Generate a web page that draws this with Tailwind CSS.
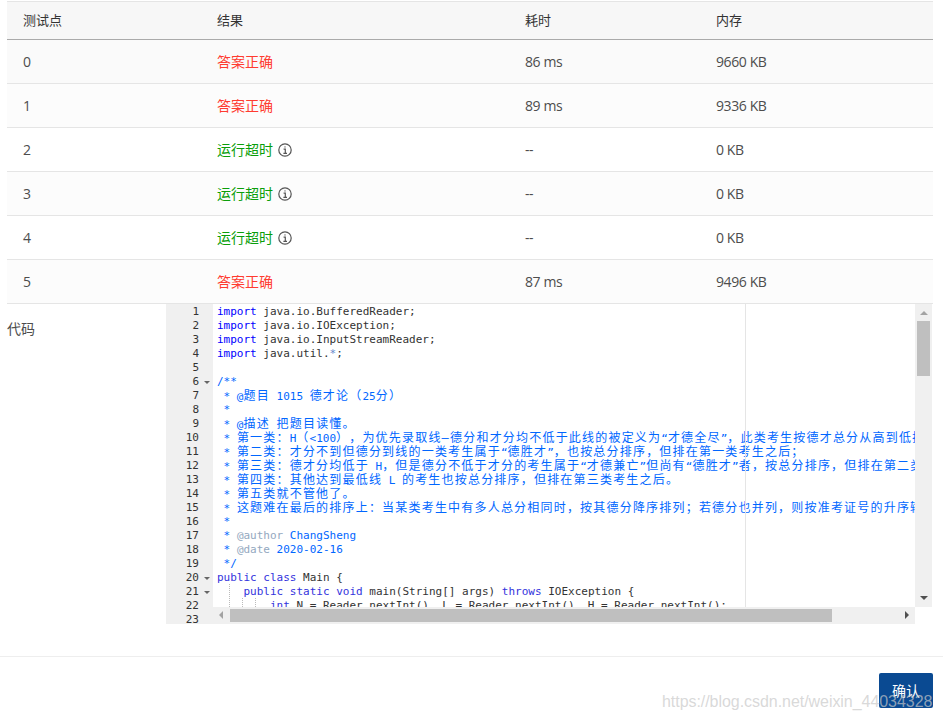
<!DOCTYPE html>
<html lang="en">
<head>
    <meta charset="UTF-8">
    <title>测试点结果</title>
    <script src="https://cdn.jsdelivr.net/npm/@tailwindcss/browser@4"></script>
</head>
<body class="bg-white text-[14px] text-[#4d4d4d] font-['Open_Sans','Noto_Sans_CJK_SC',sans-serif]">
    <div class="relative h-[720px] w-[943px] overflow-hidden">
        <!-- Results table -->
        <div class="pt-px pl-[7px] pr-[10px]">
            <table class="w-full table-fixed border-collapse">
                <colgroup>
                    <col class="w-[194px]">
                    <col class="w-[308px]">
                    <col class="w-[191px]">
                    <col>
                </colgroup>
                <thead>
                    <tr class="h-[38px] bg-[#f7f7f7] border-t border-t-[#e5e5e5] border-b border-b-[#aaaaaa] text-left text-[13px] text-[#333]">
                        <th class="pl-4 font-normal">测试点</th>
                        <th class="pl-4 font-normal">结果</th>
                        <th class="pl-4 font-normal">耗时</th>
                        <th class="pl-4 font-normal">内存</th>
                    </tr>
                </thead>
                <tbody class="tracking-[-0.4px]">
                    <tr class="h-[44px] bg-[#fafafa] border-b border-[#e5e5e5]">
                        <td class="pl-4">0</td>
                        <td class="pl-4 tracking-normal text-[#ff3b30]">答案正确</td>
                        <td class="pl-4">86 ms</td>
                        <td class="pl-4">9660 KB</td>
                    </tr>
                    <tr class="h-[44px] bg-[#fcfcfc] border-b border-[#e5e5e5]">
                        <td class="pl-4">1</td>
                        <td class="pl-4 tracking-normal text-[#ff3b30]">答案正确</td>
                        <td class="pl-4">89 ms</td>
                        <td class="pl-4">9336 KB</td>
                    </tr>
                    <tr class="h-[44px] border-b border-[#e5e5e5]">
                        <td class="pl-4">2</td>
                        <td class="pl-4 tracking-normal text-[#0a9e0a]">
                            <span class="flex items-center gap-[5px]">运行超时
                                <svg class="h-[14px] w-[14px]" viewBox="0 0 14 14" fill="none" stroke="#555" stroke-width="1.2"><circle cx="7" cy="7" r="6.2"/><path d="M5.6 6.2H7.3V10.4M5.4 10.4H9"/><circle cx="7" cy="3.9" r=".7" fill="#555" stroke="none"/></svg>
                            </span>
                        </td>
                        <td class="pl-4">--</td>
                        <td class="pl-4">0 KB</td>
                    </tr>
                    <tr class="h-[44px] bg-[#fcfcfc] border-b border-[#e5e5e5]">
                        <td class="pl-4">3</td>
                        <td class="pl-4 tracking-normal text-[#0a9e0a]">
                            <span class="flex items-center gap-[5px]">运行超时
                                <svg class="h-[14px] w-[14px]" viewBox="0 0 14 14" fill="none" stroke="#555" stroke-width="1.2"><circle cx="7" cy="7" r="6.2"/><path d="M5.6 6.2H7.3V10.4M5.4 10.4H9"/><circle cx="7" cy="3.9" r=".7" fill="#555" stroke="none"/></svg>
                            </span>
                        </td>
                        <td class="pl-4">--</td>
                        <td class="pl-4">0 KB</td>
                    </tr>
                    <tr class="h-[44px] border-b border-[#e5e5e5]">
                        <td class="pl-4">4</td>
                        <td class="pl-4 tracking-normal text-[#0a9e0a]">
                            <span class="flex items-center gap-[5px]">运行超时
                                <svg class="h-[14px] w-[14px]" viewBox="0 0 14 14" fill="none" stroke="#555" stroke-width="1.2"><circle cx="7" cy="7" r="6.2"/><path d="M5.6 6.2H7.3V10.4M5.4 10.4H9"/><circle cx="7" cy="3.9" r=".7" fill="#555" stroke="none"/></svg>
                            </span>
                        </td>
                        <td class="pl-4">--</td>
                        <td class="pl-4">0 KB</td>
                    </tr>
                    <tr class="h-[44px] bg-[#fcfcfc] border-b border-[#e5e5e5]">
                        <td class="pl-4">5</td>
                        <td class="pl-4 tracking-normal text-[#ff3b30]">答案正确</td>
                        <td class="pl-4">87 ms</td>
                        <td class="pl-4">9496 KB</td>
                    </tr>
                </tbody>
            </table>
        </div>

        <!-- Code block -->
        <div class="flex pl-[7px]">
            <div class="w-[159px] pt-[15px] leading-[20px]">代码</div>
            <div class="flex h-[320px] w-[766px] font-['DejaVu_Sans_Mono','Noto_Sans_CJK_SC',monospace] text-[11px] leading-[14px] [text-spacing-trim:space-all]">
                <!-- Gutter -->
                <div class="h-[320px] w-[47px] shrink-0 overflow-hidden bg-[#f0f0f0] pt-px text-right text-[#333]">
                    <div class="pr-[14px]">1</div>
                    <div class="pr-[14px]">2</div>
                    <div class="pr-[14px]">3</div>
                    <div class="pr-[14px]">4</div>
                    <div class="pr-[14px]">5</div>
                    <div class="relative pr-[14px]">6<span class="absolute right-[3px] top-[6px] border-x-[3px] border-t-[3px] border-x-transparent border-t-[#666]"></span></div>
                    <div class="pr-[14px]">7</div>
                    <div class="pr-[14px]">8</div>
                    <div class="pr-[14px]">9</div>
                    <div class="pr-[14px]">10</div>
                    <div class="pr-[14px]">11</div>
                    <div class="pr-[14px]">12</div>
                    <div class="pr-[14px]">13</div>
                    <div class="pr-[14px]">14</div>
                    <div class="pr-[14px]">15</div>
                    <div class="pr-[14px]">16</div>
                    <div class="pr-[14px]">17</div>
                    <div class="pr-[14px]">18</div>
                    <div class="pr-[14px]">19</div>
                    <div class="relative pr-[14px]">20<span class="absolute right-[3px] top-[6px] border-x-[3px] border-t-[3px] border-x-transparent border-t-[#666]"></span></div>
                    <div class="relative pr-[14px]">21<span class="absolute right-[3px] top-[6px] border-x-[3px] border-t-[3px] border-x-transparent border-t-[#666]"></span></div>
                    <div class="pr-[14px]">22</div>
                    <div class="pr-[14px]">23</div>
                </div>
                <div class="flex w-[719px] flex-col">
                    <div class="flex h-[303px]">
                        <!-- Editor lines -->
                        <div class="relative h-[303px] w-[702px] overflow-hidden pl-[4px] pt-px text-[#333] [&>div]:h-[14px] [&>div]:whitespace-pre">
                            <span class="absolute left-[532px] top-0 h-full w-px bg-[#e5e5e5]"></span>
                            <span class="absolute left-[16px] top-[280px] h-[23px] border-l border-dotted border-[#bbb]"></span>
                            <span class="absolute left-[29px] top-[294px] h-[9px] border-l border-dotted border-[#bbb]"></span>
                            <span class="absolute left-[42px] top-[294px] h-[9px] border-l border-dotted border-[#bbb]"></span>
                            <div><span class="text-[#0000ff]">import</span> java.io.BufferedReader;</div>
                            <div><span class="text-[#0000ff]">import</span> java.io.IOException;</div>
                            <div><span class="text-[#0000ff]">import</span> java.io.InputStreamReader;</div>
                            <div><span class="text-[#0000ff]">import</span> java.util.<span class="text-[#6688cc]">*</span>;</div>
                            <div></div>
                            <div class="text-[#0066ff]">/**</div>
                            <div class="text-[#0066ff]"> * @<span class="text-[12px] tracking-[1.2px]">题目</span> 1015 <span class="text-[12px] tracking-[1.2px]">德才论（</span>25<span class="text-[12px] tracking-[1.2px]">分）</span></div>
                            <div class="text-[#0066ff]"> *</div>
                            <div class="text-[#0066ff]"> * @<span class="text-[12px] tracking-[1.2px]">描述</span> <span class="text-[12px] tracking-[1.2px]">把题目读懂。</span></div>
                            <div class="text-[#0066ff]"> * <span class="text-[12px] tracking-[1.2px]">第一类：</span>H<span class="text-[12px] tracking-[1.2px]">（</span>&lt;100<span class="text-[12px] tracking-[1.2px]">），为优先录取线—德分和才分均不低于此线的被定义为</span>“<span class="text-[12px] tracking-[1.2px]">才德全尽</span>”<span class="text-[12px] tracking-[1.2px]">，此类考生按德才总分从高到低排序；</span></div>
                            <div class="text-[#0066ff]"> * <span class="text-[12px] tracking-[1.2px]">第二类：才分不到但德分到线的一类考生属于</span>“<span class="text-[12px] tracking-[1.2px]">德胜才</span>”<span class="text-[12px] tracking-[1.2px]">，也按总分排序，但排在第一类考生之后；</span></div>
                            <div class="text-[#0066ff]"> * <span class="text-[12px] tracking-[1.2px]">第三类：德才分均低于</span> H<span class="text-[12px] tracking-[1.2px]">，但是德分不低于才分的考生属于</span>“<span class="text-[12px] tracking-[1.2px]">才德兼亡</span>”<span class="text-[12px] tracking-[1.2px]">但尚有</span>“<span class="text-[12px] tracking-[1.2px]">德胜才</span>”<span class="text-[12px] tracking-[1.2px]">者，按总分排序，但排在第二类考生之后；</span></div>
                            <div class="text-[#0066ff]"> * <span class="text-[12px] tracking-[1.2px]">第四类：其他达到最低线</span> L <span class="text-[12px] tracking-[1.2px]">的考生也按总分排序，但排在第三类考生之后。</span></div>
                            <div class="text-[#0066ff]"> * <span class="text-[12px] tracking-[1.2px]">第五类就不管他了。</span></div>
                            <div class="text-[#0066ff]"> * <span class="text-[12px] tracking-[1.2px]">这题难在最后的排序上：当某类考生中有多人总分相同时，按其德分降序排列；若德分也并列，则按准考证号的升序输出。</span></div>
                            <div class="text-[#0066ff]"> *</div>
                            <div class="text-[#0066ff]"> * <span class="text-[#93a8c0]">@author</span> ChangSheng</div>
                            <div class="text-[#0066ff]"> * <span class="text-[#93a8c0]">@date</span> 2020-02-16</div>
                            <div class="text-[#0066ff]"> */</div>
                            <div><span class="text-[#3333dd]">public class</span> Main {</div>
                            <div>    <span class="text-[#3333dd]">public static void</span> main(String[] args) <span class="text-[#3333dd]">throws</span> IOException {</div>
                            <div>        <span class="text-[#3333dd]">int</span> N = Reader.nextInt(), L = Reader.nextInt(), H = Reader.nextInt();</div>
                        </div>
                        <!-- Vertical scrollbar -->
                        <div class="relative h-[303px] w-[17px] bg-[#f0f0f0]">
                            <span class="absolute left-[5px] top-[7px] border-x-[4px] border-b-[4px] border-x-transparent border-b-[#a3a3a3]"></span>
                            <div class="absolute left-[2px] top-[17px] h-[55px] w-[13px] bg-[#bfbfbf]"></div>
                            <span class="absolute bottom-[7px] left-[5px] border-x-[4px] border-t-[4px] border-x-transparent border-t-[#505050]"></span>
                        </div>
                    </div>
                    <!-- Horizontal scrollbar -->
                    <div class="relative h-[17px] w-[702px] bg-[#f0f0f0]">
                        <span class="absolute left-[6px] top-[4px] border-y-[4px] border-r-[4px] border-y-transparent border-r-[#a3a3a3]"></span>
                        <div class="absolute left-[17px] top-[2px] h-[13px] w-[602px] bg-[#bfbfbf]"></div>
                        <span class="absolute right-[6px] top-[4px] border-y-[4px] border-l-[4px] border-y-transparent border-l-[#505050]"></span>
                    </div>
                </div>
            </div>
        </div>

        <!-- Footer -->
        <div class="mt-[32px] flex justify-end border-t border-[#eeeeee] pt-[16px] pr-[10px]">
            <button class="h-[35px] w-[54px] rounded-[2px] bg-[#0a4a92] text-[14px] text-white">确认</button>
        </div>

        <!-- Watermark -->
        <div class="absolute left-[662px] top-[691px] font-['Liberation_Sans',sans-serif] text-[16px] tracking-[-0.05px] leading-[22px] text-[#c8c8c8]/70">https://blog.csdn.net/weixin_44034328</div>
    </div>
</body>
</html>
